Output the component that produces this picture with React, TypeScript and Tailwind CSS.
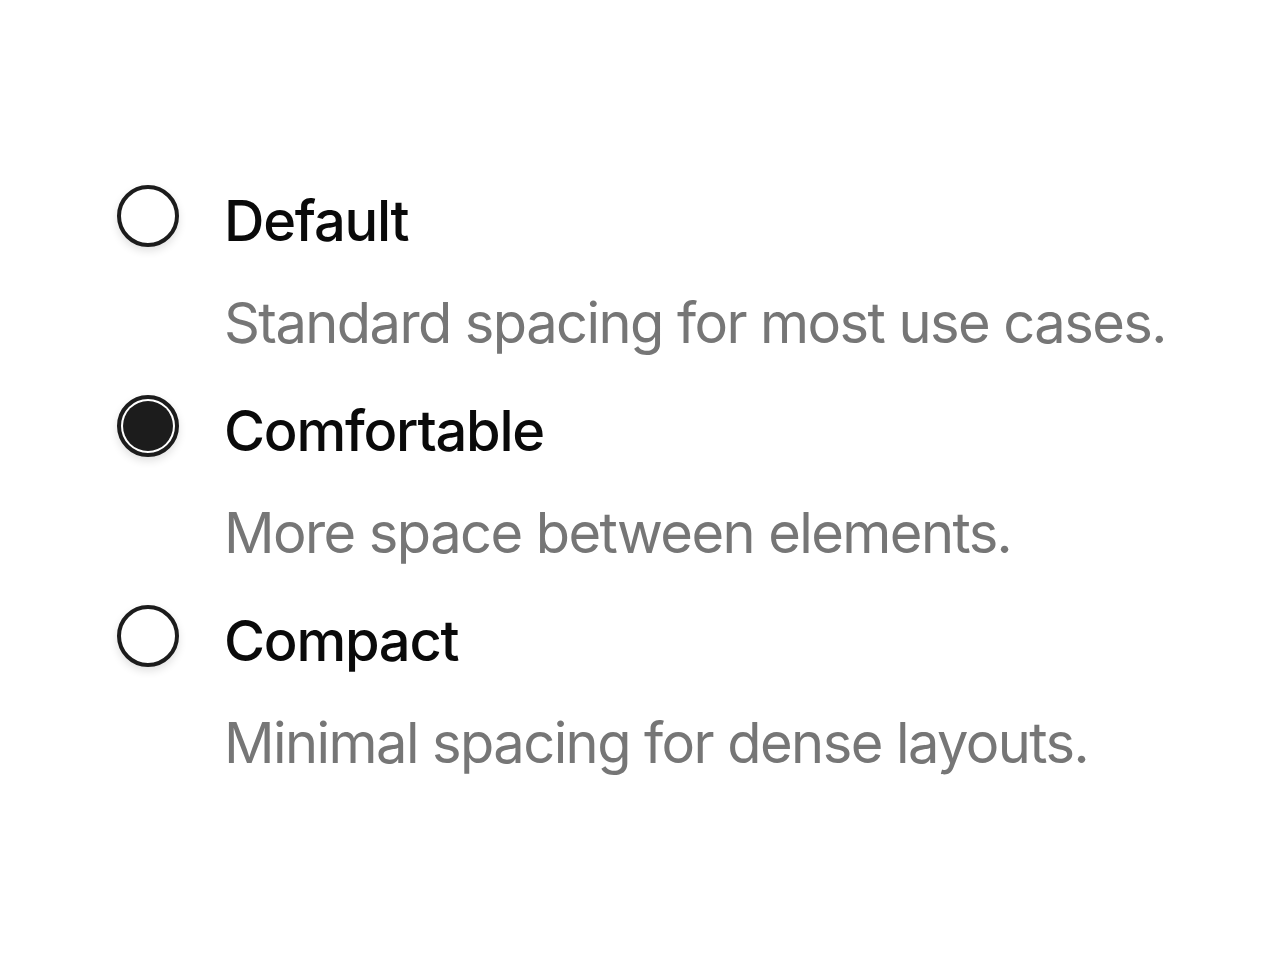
import React from "react";

const options = [
  { id: "default", label: "Default", description: "Standard spacing for most use cases." },
  { id: "comfortable", label: "Comfortable", description: "More space between elements." },
  { id: "compact", label: "Compact", description: "Minimal spacing for dense layouts." },
];

function Radio({ checked }: { checked: boolean }) {
  return (
    <div className="w-[62px] h-[62px] rounded-full border-[4px] border-[#1c1c1c] bg-white shadow-[0_4px_8px_rgba(0,0,0,0.12)] flex items-center justify-center">
      {checked && <div className="w-[50px] h-[50px] rounded-full bg-[#1c1c1c]" />}
    </div>
  );
}

export default function App() {
  const [value, setValue] = React.useState("comfortable");

  return (
    <div className="w-[1280px] h-[960px] bg-white pl-[117px] pt-[185px] font-['Inter',sans-serif]">
      <div className="flex flex-col">
        {options.map((opt) => (
          <div
            key={opt.id}
            className="grid grid-cols-[62px_1fr] gap-x-[45px] mb-[37px] cursor-pointer"
            onClick={() => setValue(opt.id)}
          >
            <Radio checked={value === opt.id} />
            <div className="text-[56px] leading-[70px] font-medium tracking-[-0.022em] text-[#0a0a0a] pt-[1px]">
              {opt.label}
            </div>
            <div />
            <div className="mt-[32px] text-[56px] leading-[70px] tracking-[-0.028em] text-[#767676]">
              {opt.description}
            </div>
          </div>
        ))}
      </div>
    </div>
  );
}
